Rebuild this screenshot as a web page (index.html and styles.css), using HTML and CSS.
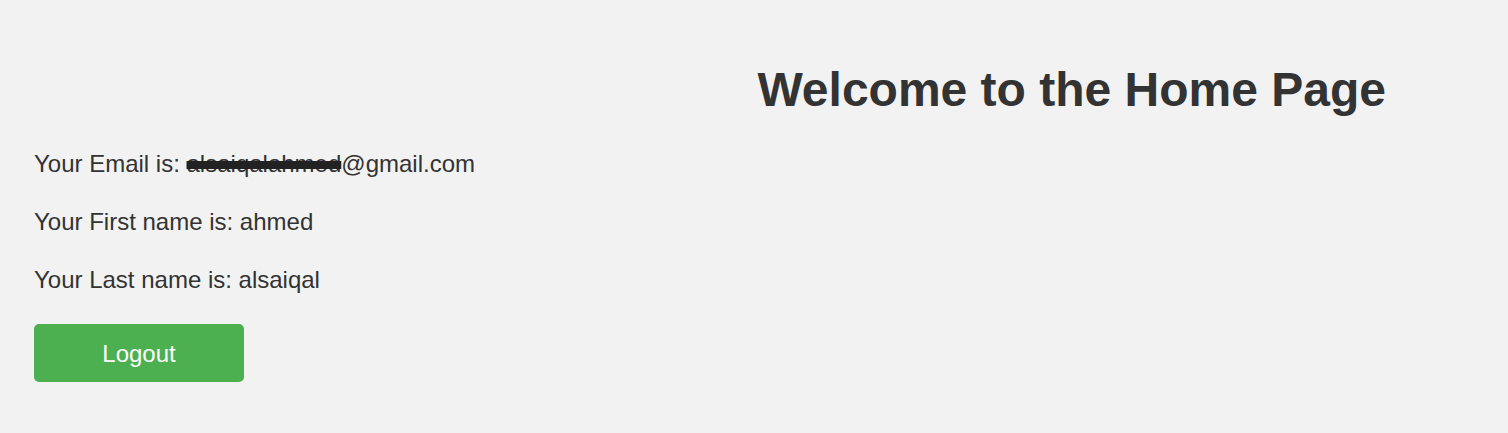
FILE: index.html
```html
<!DOCTYPE html>
<html>
<head>
<meta charset="utf-8">
<link rel="stylesheet" href="styles.css">
</head>
<body>
<div class="page">
  <header class="top">
    <h1 class="title">Welcome to the Home Page</h1>
  </header>
  <section class="info">
    <p class="line">Your Email is: <span class="redact">alsaiqalahmed</span>@gmail.com</p>
    <p class="line">Your First name is: ahmed</p>
    <p class="line">Your Last name is: alsaiqal</p>
    <button class="logout">Logout</button>
  </section>
</div>
</body>
</html>
```
FILE: styles.css
```css
html, body {
  margin: 0;
  padding: 0;
  background: #f2f2f2;
}
body {
  font-family: "Liberation Sans", Arial, sans-serif;
  color: #333333;
}
.page {
  padding: 0 34px;
}
.top {
  display: flex;
  justify-content: flex-end;
  padding-top: 62px;
  padding-right: 88px;
}
.title {
  margin: 0;
  font-size: 48px;
  line-height: 56px;
  font-weight: bold;
  color: #333333;
}
.info {
  display: flex;
  flex-direction: column;
  align-items: flex-start;
  padding-top: 32px;
}
.line {
  margin: 0 0 30px 0;
  font-size: 24px;
  line-height: 28px;
}
.redact {
  text-decoration: line-through;
  text-decoration-thickness: 8px;
  text-decoration-color: #222222;
}
.logout {
  width: 210px;
  height: 58px;
  padding-top: 2px;
  border: none;
  border-radius: 5px;
  background: #4caf50;
  color: #ffffff;
  font-family: "Liberation Sans", Arial, sans-serif;
  font-size: 24px;
  cursor: pointer;
}
```
